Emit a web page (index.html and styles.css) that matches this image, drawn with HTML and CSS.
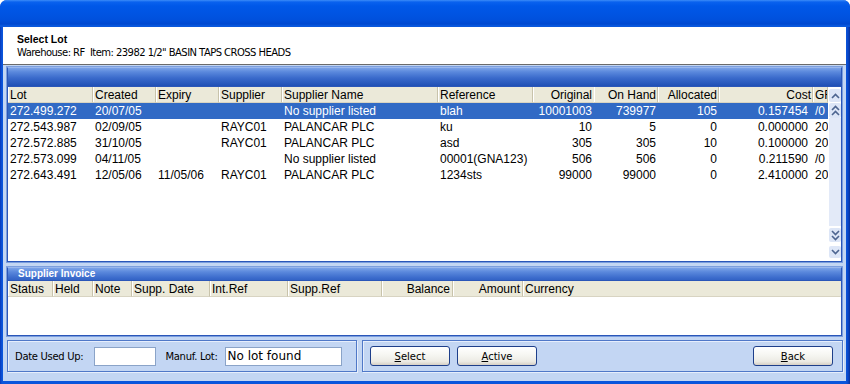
FILE: index.html
```html
<!DOCTYPE html>
<html>
<head>
<meta charset="utf-8">
<link rel="stylesheet" href="styles.css">
</head>
<body>
<div class="window">
  <div class="titlebar"></div>
  <div class="client">
    <div class="head">
      <div class="h-title">Select Lot</div>
      <div class="h-sub">Warehouse: RF&nbsp;&nbsp;Item: 23982 1/2" BASIN TAPS CROSS HEADS</div>
    </div>
    <div class="body">
      <div class="panel grid-panel">
        <div class="bar"></div>
        <div class="grid-wrap">
          <div class="grid lots">
            <div class="row hdr">
              <div class="c">Lot</div><div class="c">Created</div><div class="c">Expiry</div><div class="c">Supplier</div><div class="c">Supplier Name</div><div class="c">Reference</div><div class="c r nosep">Original</div><div class="c r">On Hand</div><div class="c r">Allocated</div><div class="c r">Cost</div><div class="c clip">GF</div>
            </div>
            <div class="row sel">
              <div class="c">272.499.272</div><div class="c">20/07/05</div><div class="c"></div><div class="c"></div><div class="c">No supplier listed</div><div class="c">blah</div><div class="c r">10001003</div><div class="c r">739977</div><div class="c r">105</div><div class="c r cost">0.157454</div><div class="c clip">/0</div>
            </div>
            <div class="row">
              <div class="c">272.543.987</div><div class="c">02/09/05</div><div class="c"></div><div class="c">RAYC01</div><div class="c">PALANCAR PLC</div><div class="c">ku</div><div class="c r">10</div><div class="c r">5</div><div class="c r">0</div><div class="c r cost">0.000000</div><div class="c clip">20</div>
            </div>
            <div class="row">
              <div class="c">272.572.885</div><div class="c">31/10/05</div><div class="c"></div><div class="c">RAYC01</div><div class="c">PALANCAR PLC</div><div class="c">asd</div><div class="c r">305</div><div class="c r">305</div><div class="c r">10</div><div class="c r cost">0.100000</div><div class="c clip">20</div>
            </div>
            <div class="row">
              <div class="c">272.573.099</div><div class="c">04/11/05</div><div class="c"></div><div class="c"></div><div class="c">No supplier listed</div><div class="c">00001(GNA123)</div><div class="c r">506</div><div class="c r">506</div><div class="c r">0</div><div class="c r cost">0.211590</div><div class="c clip">/0</div>
            </div>
            <div class="row">
              <div class="c">272.643.491</div><div class="c">12/05/06</div><div class="c">11/05/06</div><div class="c">RAYC01</div><div class="c">PALANCAR PLC</div><div class="c">1234sts</div><div class="c r">99000</div><div class="c r">99000</div><div class="c r">0</div><div class="c r cost">2.410000</div><div class="c clip">20</div>
            </div>
          </div>
          <div class="vscroll">
            <div class="sbtn top">
              <svg width="11" height="12" viewBox="0 0 11 12"><polyline points="2,8 5.5,4.5 9,8" fill="none" stroke="#4d6590" stroke-width="1.6"/></svg>
            </div>
            <div class="sbtn">
              <svg width="11" height="14" viewBox="0 0 11 14"><polyline points="2,6 5.5,2.5 9,6" fill="none" stroke="#4d6590" stroke-width="1.6"/><polyline points="2,11 5.5,7.5 9,11" fill="none" stroke="#4d6590" stroke-width="1.6"/></svg>
            </div>
            <div class="thumb"></div>
            <div class="track"></div>
            <div class="sbtn">
              <svg width="11" height="14" viewBox="0 0 11 14"><polyline points="2,3 5.5,6.5 9,3" fill="none" stroke="#4d6590" stroke-width="1.6"/><polyline points="2,8 5.5,11.5 9,8" fill="none" stroke="#4d6590" stroke-width="1.6"/></svg>
            </div>
            <div class="gap"></div>
            <div class="sbtn bottom">
              <svg width="11" height="12" viewBox="0 0 11 12"><polyline points="2,4 5.5,7.5 9,4" fill="none" stroke="#4d6590" stroke-width="1.6"/></svg>
            </div>
          </div>
        </div>
      </div>
      <div class="panel inv-panel">
        <div class="bar small">Supplier Invoice</div>
        <div class="grid inv">
          <div class="row hdr">
            <div class="c">Status</div><div class="c">Held</div><div class="c">Note</div><div class="c">Supp. Date</div><div class="c">Int.Ref</div><div class="c">Supp.Ref</div><div class="c r">Balance</div><div class="c r">Amount</div><div class="c nosep">Currency</div>
          </div>
        </div>
      </div>
      <div class="footer">
        <div class="group g-left">
          <span class="lbl">Date Used Up:</span>
          <div class="input i-date"></div>
          <span class="lbl">Manuf. Lot:</span>
          <div class="input i-lot">No lot found</div>
        </div>
        <div class="group g-right">
          <button class="btn"><u>S</u>elect</button>
          <button class="btn"><u>A</u>ctive</button>
          <span class="spacer"></span>
          <button class="btn"><u>B</u>ack</button>
        </div>
      </div>
    </div>
  </div>
</div>
</body>
</html>
```

FILE: styles.css
```css
* { box-sizing: border-box; }
html, body { margin: 0; padding: 0; background: #ffffff; }
body { width: 850px; height: 384px; overflow: hidden; font-family: "Liberation Sans", Arial, sans-serif; }

.window {
  width: 850px;
  height: 384px;
  background: linear-gradient(to right, #0838b8 0, #0a55dc 2px, #0a55dc 846px, #0a47c8 848px, #06309a 850px);
  border-radius: 7px 7px 0 0;
  display: flex;
  flex-direction: column;
  padding: 0 4px 3px 3px;
}
.titlebar {
  height: 27px;
  margin: 0 -4px 0 -3px;
  border-radius: 7px 7px 0 0;
  background: linear-gradient(to bottom, #3c8cf8 0, #0a62ee 2px, #0058e8 6px, #0054e2 14px, #0050dc 20px, #0048d0 24px, #0a5ae0 26px, #0d56d6 27px);
}
.client {
  flex: 1;
  display: flex;
  flex-direction: column;
  background: #c3d6f3;
}
.head {
  height: 38px;
  background: #ffffff;
  border-bottom: 1px solid #6a6a6a;
  padding: 6px 0 0 14px;
  font-family: "DejaVu Sans", sans-serif;
  font-size: 10px;
  color: #000;
}
.h-title { font-family: "Liberation Sans", Arial, sans-serif; font-weight: bold; font-size: 10.5px; height: 13px; line-height: 13px; }
.h-sub { height: 13px; line-height: 13px; letter-spacing: -0.55px; }

.body {
  flex: 1;
  display: flex;
  flex-direction: column;
  padding: 1px 3px 0 3px;
}
.panel {
  border: 1px solid #7b9ede;
  background: #ffffff;
  display: flex;
  flex-direction: column;
}
.grid-panel { height: 197px; }
.inv-panel { height: 71px; margin-top: 3px; }

.bar {
  height: 20px;
  flex: none;
  background: linear-gradient(to bottom, #7ca3e8 0, #5a88dc 4px, #3a6acb 10px, #2353b8 17px, #1c4aab 20px);
  border: 1px solid #2a56b8;
  border-top-color: #9ab7ec;
}
.bar.small {
  height: 14px;
  color: #ffffff;
  font-family: "Liberation Sans", Arial, sans-serif;
  font-weight: bold;
  font-size: 10px;
  line-height: 12px;
  padding-left: 10px;
}
.grid-wrap { flex: 1; display: flex; min-height: 0; border-left: 1px solid #2a56b8; border-right: 1px solid #2a56b8; border-bottom: 1px solid #2a56b8; }
.grid { font-size: 12px; color: #000; }
.lots { width: 820px; }
.inv { flex: 1; border-left: 1px solid #2a56b8; border-right: 1px solid #2a56b8; border-bottom: 1px solid #2a56b8; }
.row { display: grid; height: 16px; line-height: 15px; }
.lots .row { grid-template-columns: 85px 63px 63px 63px 156px 95px 61px 64px 61px 94px 15px; }
.inv .row { grid-template-columns: 45px 40px 39px 78px 78px 94px 71px 70px 1fr; }
.c { white-space: nowrap; overflow: hidden; padding: 1px 2px 0 2px; }
.c.r { text-align: right; padding-right: 2px; }
.c.r.cost { padding-right: 5px; }
.c.clip { text-overflow: clip; padding-right: 0; }
.hdr { background: #ebe9d9; }
.hdr .c { border-right: 1px solid #c8c3ab; box-shadow: inset 1px 0 0 #ffffff; border-bottom: 1px solid #d8d4c2; }
.hdr .c.nosep { border-right-color: transparent; }
.lots .hdr .c.r { padding-right: 1px; }
.sel { background: #316ac5; color: #ffffff; }

.vscroll {
  width: 14px;
  display: flex;
  flex-direction: column;
  align-items: center;
  background: #ffffff;
  padding-left: 1px;
}
.sbtn {
  width: 12px;
  display: flex;
  align-items: center;
  justify-content: center;
  background: #dde6f7;
  border-radius: 2px;
}
.sbtn.top { height: 13px; margin-top: 2px; }
.sbtn + .sbtn { height: 15px; margin-top: 1px; }
.thumb { width: 12px; height: 108px; background: #e3eaf8; }
.track { flex: 1; }
.gap { height: 4px; }
.sbtn.bottom { height: 12px; margin-bottom: 3px; }

.footer {
  flex: 1;
  display: flex;
  gap: 5px;
  padding: 3px 0 0 1px;
}
.group {
  height: 32px;
  border: 1px solid #4f78c8;
  box-shadow: inset 1px 1px 0 #e6eefc, 1px 1px 0 #e6eefc;
  display: flex;
  align-items: center;
  font-size: 11px;
}
.g-left { width: 350px; padding-left: 7px; }
.g-right { flex: 1; padding: 0 9px 0 7px; gap: 7px; }
.lbl { color: #000; font-family: "DejaVu Sans", sans-serif; font-size: 10px; letter-spacing: -0.3px; }
.input {
  height: 19px;
  background: #ffffff;
  border: 1px solid #8aa3c8;
}
.i-date { width: 62px; margin: 0 9px 0 11px; }
.i-lot { width: 117px; margin-left: 7px; font-family: "DejaVu Sans", sans-serif; font-size: 12px; line-height: 17px; padding-left: 2px; color: #000; }
.spacer { flex: 1; }
.btn {
  width: 80px;
  height: 20px;
  padding: 0;
  margin: 0;
  border: 1px solid #1e3f8a;
  border-radius: 3px;
  background: linear-gradient(to bottom, #ffffff 0, #f7f7f3 40%, #ecebe4 80%, #d6d0c5 100%);
  font-family: "DejaVu Sans", sans-serif;
  font-size: 10px;
  color: #000;
  line-height: 17px;
}
```
